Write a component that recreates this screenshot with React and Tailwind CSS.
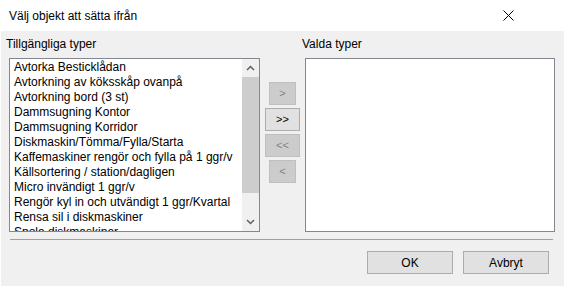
import React from 'react'

const items = [
  'Avtorka Bestickl\u00e5dan',
  'Avtorkning av k\u00f6ksskåp ovanp\u00e5',
  'Avtorkning bord (3 st)',
  'Dammsugning Kontor',
  'Dammsugning Korridor',
  'Diskmaskin/T\u00f6mma/Fylla/Starta',
  'Kaffemaskiner reng\u00f6r och fylla p\u00e5 1 ggr/v',
  'K\u00e4llsortering / station/dagligen',
  'Micro inv\u00e4ndigt 1 ggr/v',
  'Reng\u00f6r kyl in och utv\u00e4ndigt 1 ggr/Kvartal',
  'Rensa sil i diskmaskiner',
  'Spola diskmaskiner',
]

function Chevron({ up }) {
  return (
    <svg width="9" height="6" viewBox="0 0 9 6" className="block">
      <path d={up ? 'M1 5 L4.5 1.5 L8 5' : 'M1 1 L4.5 4.5 L8 1'} fill="none" stroke="#606060" strokeWidth="1.5" />
    </svg>
  )
}

function MoveButton({ label, wide, enabled }) {
  return (
    <div
      className={
        'h-[23px] flex items-center justify-center text-[11px] border ' +
        (wide ? 'w-[35px] ' : 'w-[27px] ') +
        (enabled ? 'bg-[#e1e1e1] border-[#adadad] text-black' : 'bg-[#cccccc] border-[#bfbfbf] text-[#838383]')
      }
    >
      {label}
    </div>
  )
}

export default function App() {
  return (
    <div className="w-[565px] h-[287px] flex flex-col bg-white text-[12px] text-black" style={{ fontFamily: '"Liberation Sans", Arial, sans-serif' }}>
      <div className="h-[31px] shrink-0 flex items-center justify-between pl-[9px] pr-[51px]">
        <span>Välj objekt att sätta ifrån</span>
        <svg width="11" height="11" viewBox="0 0 11 11">
          <path d="M0.5 0.5 L10.5 10.5 M10.5 0.5 L0.5 10.5" stroke="#000" strokeWidth="1" />
        </svg>
      </div>
      <div className="flex-1 bg-[#f0f0f0] mx-px mb-px flex flex-col pl-[8px]">
        <div className="flex mt-[5px]">
          <div className="w-[251px] flex flex-col">
            <div className="-ml-[3px] h-[22px] leading-[16px]">Tillgängliga typer</div>
            <div className="h-[174px] border border-[#828790] bg-white flex">
              <div className="flex-1 overflow-hidden pl-[4px] pt-[1px]">
                {items.map(t => (
                  <div key={t} className="h-[15px] leading-[15px] whitespace-nowrap">{t}</div>
                ))}
              </div>
              <div className="w-[17px] bg-[#f0f0f0] flex flex-col">
                <div className="h-[18px] flex items-center justify-center"><Chevron up /></div>
                <div className="h-[116px] bg-[#cdcdcd]" />
                <div className="flex-1" />
                <div className="h-[18px] flex items-center justify-center"><Chevron /></div>
              </div>
            </div>
          </div>
          <div className="w-[45px] flex flex-col items-center pt-[46px] gap-[3px]">
            <MoveButton label=">" />
            <MoveButton label=">>" wide enabled />
            <MoveButton label="<<" wide />
            <MoveButton label="<" />
          </div>
          <div className="w-[250px] flex flex-col">
            <div className="-ml-[3px] h-[22px] leading-[16px]">Valda typer</div>
            <div className="h-[174px] border border-[#828790] bg-white" />
          </div>
        </div>
        <div className="mt-[7px] ml-px w-[543px] h-px bg-[#a0a0a0]" />
        <div className="flex justify-end gap-[10px] pr-[15px] mt-[11px]">
          <div className="w-[86px] h-[23px] bg-[#e1e1e1] border border-[#adadad] flex items-center justify-center">OK</div>
          <div className="w-[86px] h-[23px] bg-[#e1e1e1] border border-[#adadad] flex items-center justify-center">Avbryt</div>
        </div>
      </div>
    </div>
  )
}
